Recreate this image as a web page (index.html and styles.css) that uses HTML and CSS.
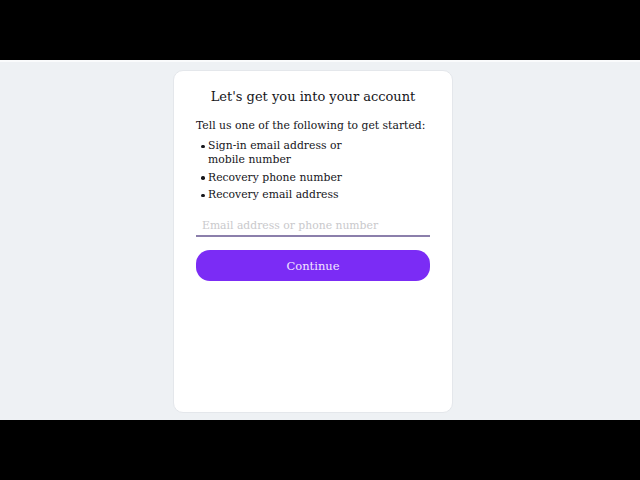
FILE: index.html
```html
<!DOCTYPE html>
<html>
<head>
<meta charset="utf-8">
<link rel="stylesheet" href="styles.css">
</head>
<body>
<div class="bar"></div>
<main class="stage">
  <section class="card">
    <h1 class="title">Let's get you into your account</h1>
    <p class="lead">Tell us one of the following to get started:</p>
    <ul class="options">
      <li>Sign-in email address or mobile number</li>
      <li>Recovery phone number</li>
      <li>Recovery email address</li>
    </ul>
    <div class="field">
      <input class="input" type="text" placeholder="Email address or phone number">
    </div>
    <button class="btn">Continue</button>
  </section>
</main>
<div class="bar"></div>
</body>
</html>
```
FILE: styles.css
```css
html, body {
  margin: 0;
  padding: 0;
  background: #000;
}
body {
  width: 640px;
  height: 480px;
  font-family: "DejaVu Serif", "Liberation Serif", serif;
  color: #15151a;
}
.bar {
  height: 60px;
  background: #000;
}
.stage {
  height: 360px;
  border-top: 2px solid #fafbfc;
  background: #eef1f4;
  display: flex;
  justify-content: flex-start;
  padding-left: 173px;
  box-sizing: border-box;
  padding-top: 8px;
}
.card {
  width: 280px;
  height: 343px;
  box-sizing: border-box;
  background: #fff;
  border: 1px solid #e4e7eb;
  border-radius: 10px;
  padding: 17px 22px 0;
}
.title {
  margin: 0;
  font-size: 13px;
  font-weight: normal;
  text-align: center;
  line-height: 18px;
}
.lead {
  margin: 13px 0 0;
  font-size: 10.8px;
  line-height: 14px;
}
.options {
  margin: 6px 0 0;
  padding: 0 0 0 12px;
  font-size: 10.8px;
  line-height: 14px;
  list-style: none;
}
.options li {
  position: relative;
  max-width: 150px;
  margin-bottom: 3.5px;
}
.options li::before {
  content: "";
  position: absolute;
  left: -7px;
  top: 5.5px;
  width: 3.5px;
  height: 3.5px;
  border-radius: 50%;
  background: #15151a;
}
.field {
  margin-top: 14px;
  border-bottom: 2px solid #8b7fab;
}
.input {
  display: block;
  width: 100%;
  box-sizing: border-box;
  border: none;
  outline: none;
  padding: 3px 6px 2px;
  font-family: inherit;
  font-size: 10.8px;
  line-height: 14px;
  background: transparent;
}
.input::placeholder {
  color: #c9c9cc;
}
.btn {
  display: block;
  width: 100%;
  height: 31px;
  margin-top: 13px;
  border: none;
  border-radius: 14px;
  background: #7b2cf5;
  color: #f3e6ff;
  font-family: inherit;
  font-size: 11.5px;
}
```
